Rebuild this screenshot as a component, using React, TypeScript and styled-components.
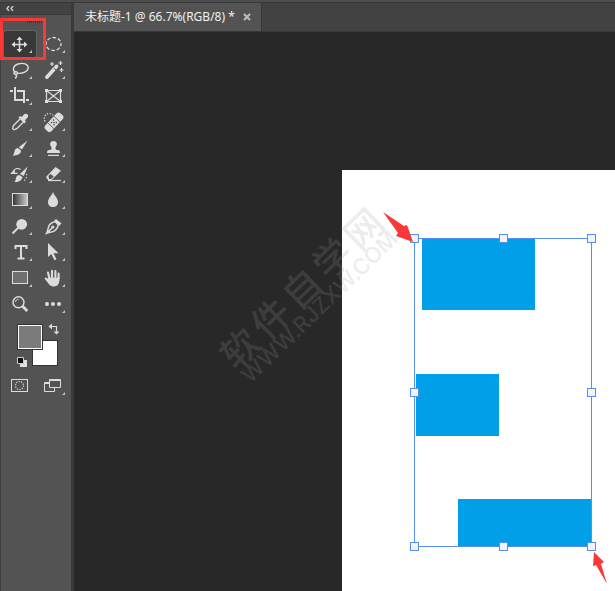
import React from "react";
import styled, { createGlobalStyle } from "styled-components";

const ink = "#dcdcdc";

const GlobalStyle = createGlobalStyle`
  * { box-sizing: border-box; }
  body { margin: 0; background: #282828; font-family: "Noto Sans", "Noto Sans CJK SC", sans-serif; }
`;

const Shell = styled.div`
  display: flex;
  flex-direction: column;
  min-height: 100vh;
  overflow: hidden;
  background: #535353;
`;

const TopEdge = styled.div`
  height: 3px;
  background: #4d4d4d;
  border-bottom: 1px solid #383838;
`;

const Workspace = styled.div`
  flex: 1;
  display: flex;
`;

const Toolbar = styled.aside`
  position: relative;
  flex: none;
  width: 74px;
  display: flex;
  flex-direction: column;
  border-left: 1px solid #404040;
  border-right: 3px solid #3a3a3a;
  background: #535353;
`;

const CollapseButton = styled.button`
  height: 12px;
  padding: 0 0 0 5px;
  display: flex;
  align-items: center;
  border: 0;
  border-bottom: 1px solid #383838;
  background: #424242;
`;

const Grip = styled.div`
  height: 16px;
  display: flex;
  justify-content: center;
  align-items: center;
  padding-bottom: 2px;
`;

const ToolGrid = styled.div`
  display: grid;
  grid-template-columns: 32px 32px;
  grid-auto-rows: 26px;
  column-gap: 1px;
  padding-left: 3px;
`;

const ToolButton = styled.button<{ $active?: boolean }>`
  display: block;
  width: 32px;
  height: 26px;
  padding: 0;
  border: 0;
  border-radius: 2px;
  background: ${(p) => (p.$active ? "#383838" : "transparent")};
  box-shadow: ${(p) => (p.$active ? "0 0 0 1px #646464" : "none")};
  svg { display: block; }
`;

const Swatches = styled.div`
  position: relative;
  height: 56px;
`;

const Swatch = styled.button<{ $front?: boolean }>`
  position: absolute;
  left: ${(p) => (p.$front ? 16 : 31)}px;
  top: ${(p) => (p.$front ? 7 : 23)}px;
  width: 26px;
  height: 26px;
  padding: 0;
  border: 1px solid #333;
  background: ${(p) => (p.$front ? "#7b7b7b" : "#fff")};
  box-shadow: inset 0 0 0 1px #fff;
`;

const SmallButton = styled.button<{ $swap?: boolean }>`
  position: absolute;
  left: ${(p) => (p.$swap ? 47 : 16)}px;
  top: ${(p) => (p.$swap ? 6 : 40)}px;
  width: 12px;
  height: 12px;
  padding: 0;
  border: 0;
  background: none;
  svg { display: block; }
`;

const Highlight = styled.div`
  position: absolute;
  left: -1px;
  top: 15px;
  width: 46px;
  height: 42px;
  border: 3px solid #fb3838;
  pointer-events: none;
`;

const Editor = styled.main`
  flex: 1;
  min-width: 0;
  display: flex;
  flex-direction: column;
`;

const TabBar = styled.div`
  height: 29px;
  display: flex;
  background: #424242;
  border-bottom: 1px solid #383838;
`;

const Tab = styled.div`
  display: flex;
  align-items: center;
  gap: 8px;
  padding: 0 10px 0 11px;
  background: #535353;
  border-right: 1px solid #383838;
  color: #f0f0f0;
  font-size: 12px;
  line-height: 18px;
  white-space: nowrap;
`;

const CloseTab = styled.button`
  width: 8px;
  height: 8px;
  padding: 0;
  border: 0;
  background: none;
  svg { display: block; }
`;

const Pasteboard = styled.div`
  position: relative;
  flex: 1;
  display: flex;
  padding: 138px 0 0 268px;
  background: #282828;
  overflow: hidden;
`;

const Artboard = styled.div`
  position: relative;
  flex: 1;
  background: #fff;
`;

const Block = styled.div<{ $x: number; $y: number; $w: number; $h: number }>`
  position: absolute;
  left: ${(p) => p.$x}px;
  top: ${(p) => p.$y}px;
  width: ${(p) => p.$w}px;
  height: ${(p) => p.$h}px;
  background: #029fe9;
`;

const Selection = styled.div`
  position: absolute;
  left: 72px;
  top: 68px;
  width: 177px;
  height: 308px;

  &::before {
    content: "";
    position: absolute;
    inset: 0 -1px -1px 0;
    border: 1px solid #568ef0;
  }
`;

const Handle = styled.i<{ $x: number; $y: number }>`
  position: absolute;
  left: ${(p) => p.$x}%;
  top: ${(p) => p.$y}%;
  width: 9px;
  height: 9px;
  margin: -4px;
  border: 1px solid #568ef0;
  background: #f4f4f8;
`;

const Pointer = styled.svg<{ $x: number; $y: number }>`
  position: absolute;
  left: ${(p) => p.$x}px;
  top: ${(p) => p.$y}px;
  overflow: visible;
`;

const Watermark = styled.div`
  position: absolute;
  left: 112px;
  top: 234px;
  width: 240px;
  display: flex;
  flex-direction: column;
  align-items: center;
  color: rgba(155, 155, 155, 0.2);
  transform: rotate(-44deg);
  pointer-events: none;
`;

const MarkTitle = styled.div`
  display: flex;
  gap: 5px;
  font: 500 38px/38px "Noto Sans CJK SC", sans-serif;
`;

const MarkUrl = styled.div`
  font: 500 22px/16px Inter, sans-serif;
`;

const Icon = ({ children, more = true }: { children: React.ReactNode; more?: boolean }) => (
  <svg width="32" height="26" viewBox="0 0 32 26" fill="none" stroke={ink} strokeWidth="1.5" aria-hidden="true">
    {children}
    {more && <path d="M28 19v3h-3z" fill="#c4c4c4" stroke="none" />}
  </svg>
);

type Tool = { name: string; more?: boolean; art: React.ReactNode };

const tools: Tool[] = [
  {
    name: "Move",
    art: (
      <>
        <path d="M15.500 8v11M10 13.500h11" />
        <path d="M15.500 5.500l3 3.500h-6zM15.500 21.500l3-3.500h-6zM7.500 13.500l3.500-3v6zM23.500 13.500l-3.500-3v6z" fill={ink} stroke="none" />
      </>
    ),
  },
  { name: "Elliptical marquee", art: <ellipse cx="16.500" cy="13" rx="7.500" ry="6.500" strokeWidth="1.300" strokeDasharray="3.600 1.900" strokeDashoffset="1.500" /> },
  {
    name: "Lasso",
    art: (
      <path d="M11.500 15.800C8 13 9 8.500 14 7c5-1.500 10.200-.2 10.200 3.600 0 4-5.700 6.400-10.700 5.600M13.600 16.300c.2-1.900-3.400-2.300-3.700-.3-.2 1.500 2.900 1.800 3.700.3zM11.800 17.200c1.300 1.500.7 3-.6 4.300" strokeWidth="1.400" />
    ),
  },
  {
    name: "Magic wand",
    art: (
      <>
        <path d="M9.800 20.200L19.500 9.500" strokeWidth="3.600" strokeLinecap="round" />
        <path d="M16.800 11l2.200 2" stroke="#535353" strokeWidth="1" />
        <path d="M15 5v4M13 7h4M23.500 4v4M21.500 6h4M24.500 11v4M22.500 13h4M20 8l1 1" strokeWidth="1.200" />
      </>
    ),
  },
  {
    name: "Crop",
    art: <path d="M11 4v13h9M6 8h3M13 8h7v12M22 17h3" strokeWidth="2" />,
  },
  {
    name: "Frame",
    more: false,
    art: (
      <>
        <path d="M9.500 7.500h14v11h-14zM9.500 7.500l14 11M23.500 7.500l-14 11" strokeWidth="1.200" />
        <path d="M8 6h3v3H8zM22 6h3v3h-3zM8 17h3v3H8zM22 17h3v3h-3z" fill={ink} stroke="none" />
      </>
    ),
  },
  {
    name: "Eyedropper",
    art: (
      <>
        <path d="M16 10l-6.200 6.300c-1 1-.4 2-1.200 3.200.8 1.200 1.600 1.400 2.600.7 1-.2 1.500-.4 2.300-1.200L19.500 13" strokeWidth="1.300" />
        <path d="M14.500 8.500l1.500-1.500 1.700 1c1.300-1.800 2.800-3.700 4.700-3.300 2 .6 2.300 2.700.8 4.300l-2.300 2.300 1 1.400-1.700 1.800z" fill={ink} stroke="none" />
      </>
    ),
  },
  {
    name: "Healing brush",
    art: (
      <>
        <g transform="rotate(-47 16.500 13.500)">
          <rect x="6" y="9.500" width="22" height="8.500" rx="3" fill={ink} stroke="none" />
          <path d="M12.300 9v9M21.300 9v9" stroke="#535353" strokeWidth=".8" />
          <path d="M14.500 12h1.400M17.700 12h1.400M14.500 15.500h1.400M17.700 15.500h1.400M16.100 13.700h1.400" stroke="#535353" strokeWidth="1.400" />
        </g>
        <path d="M8 12.500C6 8 8.500 5 11.500 4.600c2-.3 3.500.4 4.500 1.500" strokeWidth="1.300" strokeDasharray="1.300 1.500" />
      </>
    ),
  },
  {
    name: "Brush",
    art: (
      <path d="M23.500 5.500L18 14.500l-3.200-2.300zM14 13l3 2.500c.2 3.200-3 5-8.500 5 2-1.500 1.500-3 2.400-5.400.7-1.500 1.900-2.200 3.100-2.100z" fill={ink} stroke="none" />
    ),
  },
  {
    name: "Clone stamp",
    art: (
      <path d="M16.500 6c2.200 0 3.500 1.500 3.400 3.300-.1 1.700-1.600 2.500-1.400 4.200.1 1.200.8 1.500 2.500 1.500 1.400 0 2 .8 2 3H10c0-2.200.6-3 2-3 1.700 0 2.400-.3 2.500-1.500.2-1.700-1.300-2.500-1.400-4.200C13 7.500 14.300 6 16.500 6zM11 19.700h11V21H11z" fill={ink} stroke="none" />
    ),
  },
  {
    name: "History brush",
    art: (
      <>
        <path d="M23.800 5.500l-4 9.500-3.900-2zM15.200 14l3.200 2c-.4 3.600-3.700 5.200-7.900 5 1.500-1.700 1-3.200 1.800-5 .6-1.300 1.800-2 2.900-2zM10.800 8v4.800H6.300z" fill={ink} stroke="none" />
        <path d="M9.500 10c1.500-2.500 4.500-3 7-1.600M7 12.300h6.500" strokeWidth="1.300" />
        <path d="M22.500 13c.8 3-.9 6-3.700 7.500" strokeWidth="1.200" strokeDasharray="1.300 1.700" />
      </>
    ),
  },
  {
    name: "Eraser",
    art: (
      <>
        <path d="M9 16l9.500-10 5.500 3.800L14.500 19H11z" fill={ink} stroke="none" />
        <path d="M11.500 15l2-2 3.300 2.500-2.700 2.500h-2z" fill="#535353" stroke="none" />
        <path d="M11 19.500h13" strokeWidth="1.200" />
      </>
    ),
  },
  {
    name: "Gradient",
    art: (
      <>
        <defs>
          <linearGradient id="ramp">
            <stop offset="0" stopColor="#333" />
            <stop offset="1" stopColor="#ccc" />
          </linearGradient>
        </defs>
        <rect x="8.500" y="6.500" width="15" height="12" fill="url(#ramp)" strokeWidth="1" />
      </>
    ),
  },
  {
    name: "Blur",
    art: <path d="M16 5c1.500 4 5 6.300 5 10 0 3-2 5-5 5s-5-2-5-5c0-3.700 3.500-6 5-10z" fill={ink} stroke="none" />,
  },
  {
    name: "Dodge",
    art: (
      <>
        <circle cx="17.700" cy="11.300" r="5.400" fill={ink} stroke="none" />
        <path d="M14.500 14.500l-6 6" strokeWidth="2" />
      </>
    ),
  },
  {
    name: "Pen",
    art: (
      <>
        <path d="M18.500 8.500c-4 1-6.200 2.500-7 5.500-.5 2.200-.7 4-2 6.300 2.700-1 5-1 7-1.900 2.700-1.200 4-3.600 4.800-6.400zM10 20l5-5" strokeWidth="1.500" />
        <circle cx="15.800" cy="14" r="1.600" fill={ink} stroke="none" />
        <path d="M19 6l5.500 4.500-2.200 2.300-5.500-4.500z" fill={ink} stroke="none" />
      </>
    ),
  },
  {
    name: "Type",
    art: <path d="M11.500 10V7h11v3M17 7v13M13.500 19.500h7" strokeWidth="2" />,
  },
  {
    name: "Path selection",
    art: <path d="M11 4v14l3.300-3 3.200 6.200 2-1-3-6h5z" fill={ink} stroke="none" />,
  },
  {
    name: "Rectangle",
    art: <rect x="8.500" y="6.500" width="15" height="12" fill="#707070" strokeWidth="1" />,
  },
  {
    name: "Hand",
    art: (
      <>
        <path d="M12.300 13L11 7.500M15 12V5.800M18.400 12V6M21.600 13V8.500M11.500 16.500L8.800 13.500" strokeWidth="2.100" strokeLinecap="round" />
        <path d="M11.300 12.500h11.300c0 5-1.100 9-5.600 9-4 0-5.500-2.500-7.500-6z" fill={ink} stroke="none" />
      </>
    ),
  },
  {
    name: "Zoom",
    more: false,
    art: (
      <>
        <circle cx="14.500" cy="11.300" r="5.500" strokeWidth="1.500" />
        <path d="M11.500 11c.2-1.700 1.300-2.700 3-2.800" strokeWidth="1" />
        <path d="M18.300 15l5 5" strokeWidth="2.800" />
      </>
    ),
  },
  {
    name: "More tools",
    art: (
      <g fill={ink} stroke="none">
        <circle cx="10" cy="13" r="2" />
        <circle cx="16" cy="13" r="2" />
        <circle cx="22" cy="13" r="2" />
      </g>
    ),
  },
];

const modes: Tool[] = [
  {
    name: "Quick mask",
    more: false,
    art: (
      <>
        <rect x="7.500" y="6.500" width="16" height="12" strokeWidth="1" />
        <circle cx="15.500" cy="12.500" r="4" strokeWidth="1.200" strokeDasharray="1.200 1.300" />
      </>
    ),
  },
  {
    name: "Screen mode",
    art: (
      <>
        <path d="M7.500 9.500h10v9h-10zM7.500 10.500h10" strokeWidth="1" />
        <path d="M12.500 6.500h11v8h-11zM12.500 7.500h11" fill="#535353" strokeWidth="1" />
      </>
    ),
  },
];

const blocks = [
  { x: 80, y: 69, w: 113, h: 71 },
  { x: 74, y: 204, w: 83, h: 62 },
  { x: 116, y: 329, w: 134, h: 48 },
];

const handles = [
  [0, 0], [50, 0], [100, 0],
  [0, 50], [100, 50],
  [0, 100], [50, 100], [100, 100],
];

const ToolButtons = ({ items, active }: { items: Tool[]; active?: string }) => (
  <ToolGrid>
    {items.map((t) => (
      <ToolButton key={t.name} aria-label={t.name} $active={t.name === active}>
        <Icon more={t.more}>{t.art}</Icon>
      </ToolButton>
    ))}
  </ToolGrid>
);

export default function App() {
  return (
    <>
      <GlobalStyle />
      <Shell>
        <TopEdge />
        <Workspace>
          <Toolbar>
            <CollapseButton aria-label="Collapse toolbar">
              <svg width="8" height="5" viewBox="0 0 8 5" fill="none" stroke="#d0d0d0" strokeWidth="1.400">
                <path d="M3 0L1 2.500 3 5M7 0L5 2.500 7 5" />
              </svg>
            </CollapseButton>
            <Grip>
              <svg width="18" height="2" viewBox="0 0 18 2" stroke="#383838" strokeWidth="2" strokeDasharray="1 1">
                <path d="M0 1h18" />
              </svg>
            </Grip>
            <ToolButtons items={tools} active="Move" />
            <Swatches>
              <Swatch aria-label="Background color" />
              <Swatch aria-label="Foreground color" $front />
              <SmallButton aria-label="Swap colors" $swap>
                <svg width="12" height="12" viewBox="0 0 12 12" fill="none" stroke={ink}>
                  <path d="M3 3.500h5.500V9" strokeWidth="1.200" />
                  <path d="M.5 3.500L4 .5v6zM8.500 11.500L5.500 8.500h6z" fill={ink} stroke="none" />
                </svg>
              </SmallButton>
              <SmallButton aria-label="Default colors">
                <svg width="12" height="12" viewBox="0 0 12 12">
                  <path d="M3 3h7v7H3z" fill="#e0e0e0" />
                  <path d="M.5.5h6v6h-6z" fill="#111" stroke="#ccc" />
                </svg>
              </SmallButton>
            </Swatches>
            <ToolButtons items={modes} />
            <Highlight />
          </Toolbar>
          <Editor>
            <TabBar>
              <Tab>
                <span>未标题-1 @ 66.7%(RGB/8) *</span>
                <CloseTab aria-label="Close document">
                  <svg width="8" height="8" viewBox="0 0 8 8" stroke="#bdbdbd" strokeWidth="2">
                    <path d="M1 1l6 6M7 1L1 7" />
                  </svg>
                </CloseTab>
              </Tab>
            </TabBar>
            <Pasteboard>
              <Artboard>
                {blocks.map((b) => (
                  <Block key={b.y} $x={b.x} $y={b.y} $w={b.w} $h={b.h} />
                ))}
                <Selection>
                  {handles.map(([x, y]) => (
                    <Handle key={`${x}-${y}`} $x={x} $y={y} />
                  ))}
                </Selection>
                <Pointer $x={41} $y={42} width="30" height="30" viewBox="0 0 30 30" fill="#fb3838">
                  <path d="M0 0L21 14 24 13 30 30 13 24 15 21z" />
                </Pointer>
                <Pointer $x={251} $y={382} width="14" height="32" viewBox="0 0 14 32" fill="#fb3838">
                  <path d="M1 0L11 10 8 12 14 32 3 13 0 14z" />
                </Pointer>
              </Artboard>
              <Watermark>
                <MarkTitle>
                  {[..."软件自学网"].map((c) => (
                    <span key={c}>{c}</span>
                  ))}
                </MarkTitle>
                <MarkUrl>WWW.RJZXW.COM</MarkUrl>
              </Watermark>
            </Pasteboard>
          </Editor>
        </Workspace>
      </Shell>
    </>
  );
}
